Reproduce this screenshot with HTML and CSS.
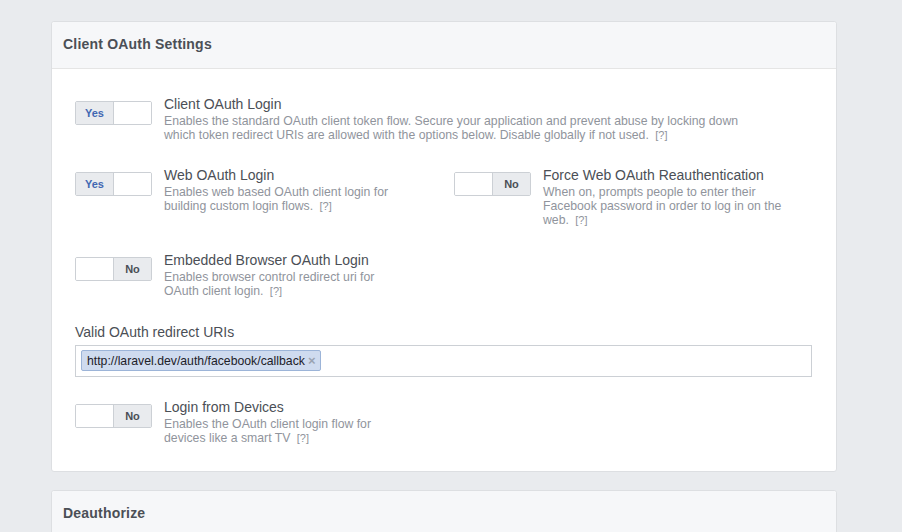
FILE: index.html
```html
<!DOCTYPE html>
<html>
<head>
<meta charset="utf-8">
<link rel="stylesheet" href="styles.css">
</head>
<body>
<div class="page">
  <section class="card">
    <div class="card-header">Client OAuth Settings</div>
    <div class="card-body">
      <div class="row">
        <div class="setting">
          <div class="toggle"><span class="half on yes">Yes</span><span class="half"></span></div>
          <div class="info">
            <div class="title">Client OAuth Login</div>
            <p class="desc wide"><span>Enables the standard OAuth client token flow. Secure your application and prevent abuse by locking down which token redirect URIs are allowed with the options below. Disable globally if not used.</span> <span class="help">[?]</span></p>
          </div>
        </div>
      </div>
      <div class="row pair">
        <div class="setting">
          <div class="toggle"><span class="half on yes">Yes</span><span class="half"></span></div>
          <div class="info">
            <div class="title">Web OAuth Login</div>
            <p class="desc"><span>Enables web based OAuth client login for building custom login flows.</span> <span class="help">[?]</span></p>
          </div>
        </div>
        <div class="setting">
          <div class="toggle"><span class="half"></span><span class="half on">No</span></div>
          <div class="info">
            <div class="title">Force Web OAuth Reauthentication</div>
            <p class="desc"><span>When on, prompts people to enter their Facebook password in order to log in on the web.</span> <span class="help">[?]</span></p>
          </div>
        </div>
      </div>
      <div class="row">
        <div class="setting">
          <div class="toggle"><span class="half"></span><span class="half on">No</span></div>
          <div class="info">
            <div class="title">Embedded Browser OAuth Login</div>
            <p class="desc"><span>Enables browser control redirect uri for OAuth client login.</span> <span class="help">[?]</span></p>
          </div>
        </div>
      </div>
      <div class="field">
        <div class="label">Valid OAuth redirect URIs</div>
        <div class="tokens"><span class="token"><span>http://laravel.dev/auth/facebook/callback</span><span class="x">×</span></span></div>
      </div>
      <div class="row last">
        <div class="setting">
          <div class="toggle"><span class="half"></span><span class="half on">No</span></div>
          <div class="info">
            <div class="title">Login from Devices</div>
            <p class="desc"><span>Enables the OAuth client login flow for devices like a smart TV</span> <span class="help">[?]</span></p>
          </div>
        </div>
      </div>
    </div>
  </section>
  <section class="card">
    <div class="card-header">Deauthorize</div>
    <div class="card-body"></div>
  </section>
</div>
</body>
</html>
```
FILE: styles.css
```css
html, body {
  margin: 0;
  padding: 0;
  background: #e9ebee;
  font-family: "Liberation Sans", Arial, sans-serif;
  color: #4b4f56;
}
.page {
  padding: 21px 0 0 51px;
  height: 511px;
  overflow: hidden;
}
.card {
  width: 786px;
  box-sizing: border-box;
  background: #fff;
  border: 1px solid #dddfe2;
  border-radius: 3px;
  margin-bottom: 18px;
}
.card-header {
  height: 46px;
  background: #f6f7f9;
  border-bottom: 1px solid #e5e5e5;
  border-radius: 3px 3px 0 0;
  padding: 0 11px;
  font-size: 14px;
  font-weight: bold;
  line-height: 45px;
  letter-spacing: 0.2px;
  color: #4b4f56;
}
.card-body {
  padding: 25px 24px 26px 23px;
}
.row {
  margin-bottom: 23px;
}
.row.last {
  margin-bottom: 0;
}
.pair {
  display: grid;
  grid-template-columns: 379px 1fr;
}
.setting {
  display: flex;
  align-items: flex-start;
}
.toggle {
  display: flex;
  width: 77px;
  height: 24px;
  box-sizing: border-box;
  border: 1px solid #ccd0d5;
  border-radius: 2px;
  margin-top: 7px;
  margin-right: 12px;
  flex: none;
  overflow: hidden;
}
.half {
  flex: 1;
  background: #fff;
  font-size: 11px;
  font-weight: bold;
  line-height: 22px;
  text-align: center;
  color: #4b4f56;
}
.half:first-child {
  border-right: 1px solid #ccd0d5;
}
.half.on {
  background: #e9ebee;
}
.half.yes {
  color: #4267b2;
}
.title {
  font-size: 14px;
  line-height: 20px;
  color: #4b4f56;
}
.desc {
  margin: 0;
  font-size: 12.25px;
  line-height: 14px;
  color: #90949c;
  max-width: 242px;
}
.desc.wide {
  max-width: 595px;
}
.help {
  font-size: 11px;
  margin-left: 3px;
}
.field {
  margin-top: 25px;
  margin-bottom: 20px;
}
.label {
  font-size: 14px;
  line-height: 18px;
  color: #4b4f56;
  margin-bottom: 4px;
}
.tokens {
  height: 32px;
  box-sizing: border-box;
  border: 1px solid #ccd0d5;
  padding: 4px 5px;
}
.token {
  display: inline-block;
  height: 21px;
  box-sizing: border-box;
  border: 1px solid #9cb4d8;
  border-radius: 2px;
  background: #cfdbef;
  padding: 0 4px 0 5px;
  font-size: 12.25px;
  line-height: 19px;
  color: #1d2129;
}
.x {
  color: #9aa3b2;
  font-size: 13px;
  font-weight: bold;
  margin-left: 3px;
}
```
